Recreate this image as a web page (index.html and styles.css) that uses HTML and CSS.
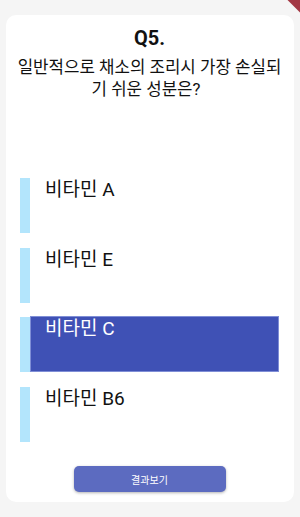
FILE: index.html
```html
<!DOCTYPE html>
<html lang="ko">
<head>
  <meta charset="UTF-8" />
  <meta name="viewport" content="width=device-width, initial-scale=1.0"/>
  <title>Quiz</title>
  <link rel="stylesheet" href="styles.css">
</head>
<body>

  <!-- Debug ribbon (mostly off-screen) -->
  <div class="debug-banner"></div>

  <div class="card">
    <h2 class="q-number">Q5.</h2>
    <p class="q-text">일반적으로 채소의 조리시 가장 손실되<br><span class="q-tail">기 쉬운 성분은?</span></p>

    <div class="options">
      <div class="option"><div class="option-box">비타민 A</div></div>
      <div class="option"><div class="option-box">비타민 E</div></div>
      <div class="option selected"><div class="option-box">비타민 C</div></div>
      <div class="option"><div class="option-box">비타민 B6</div></div>
    </div>

    <div class="actions">
      <button class="result-button">결과보기</button>
    </div>
  </div>

</body>
</html>
```

FILE: styles.css
```css
body {
  font-family: Roboto, "Noto Sans CJK KR", sans-serif;
  margin: 0;
  background: #f5f5f5;
  width: 300px;
  height: 517px;
  overflow: hidden;
  position: relative;
}

.card {
  margin: 15px 6px 0 6px;
  height: 487px;
  background: white;
  border-radius: 10px;
  padding: 0 15px 0 14px;
  box-sizing: border-box;
  display: flex;
  flex-direction: column;
}

.q-number {
  margin: 10px 0 0 0;
  font-size: 20px;
  font-weight: bold;
  text-align: center;
  line-height: 26px;
  color: #111;
}

.q-text {
  margin: 5px -4px 0 -4px;
  font-size: 16.8px;
  line-height: 22px;
  text-align: center;
  color: #111;
}

.q-tail {
  padding-right: 7px;
}

.options {
  margin-top: 78px;
  display: flex;
  flex-direction: column;
  gap: 14.5px;
}

.option {
  display: flex;
  height: 55px;
  border-left: 10px solid #b3e5fc;
}

.option-box {
  flex: 1;
  padding-left: 15px;
  font-size: 19px;
  line-height: 24px;
  color: #111;
}

.option.selected .option-box {
  background: #3f51b5;
  color: white;
  border: 1px solid #7f8ed6;
  padding-left: 14px;
  margin-top: -1px;
}

.actions {
  margin-top: auto;
  padding-bottom: 10px;
  display: flex;
  justify-content: center;
}

.result-button {
  width: 152px;
  height: 26px;
  background-color: #5c6bc0;
  color: white;
  border: none;
  border-radius: 5px;
  font-family: inherit;
  font-size: 10px;
  box-shadow: 0 1px 3px rgba(0, 0, 0, 0.3);
}

.debug-banner {
  position: absolute;
  top: -14px;
  right: -38px;
  width: 100px;
  height: 12px;
  transform: rotate(45deg);
  background: #a33844;
}
```
